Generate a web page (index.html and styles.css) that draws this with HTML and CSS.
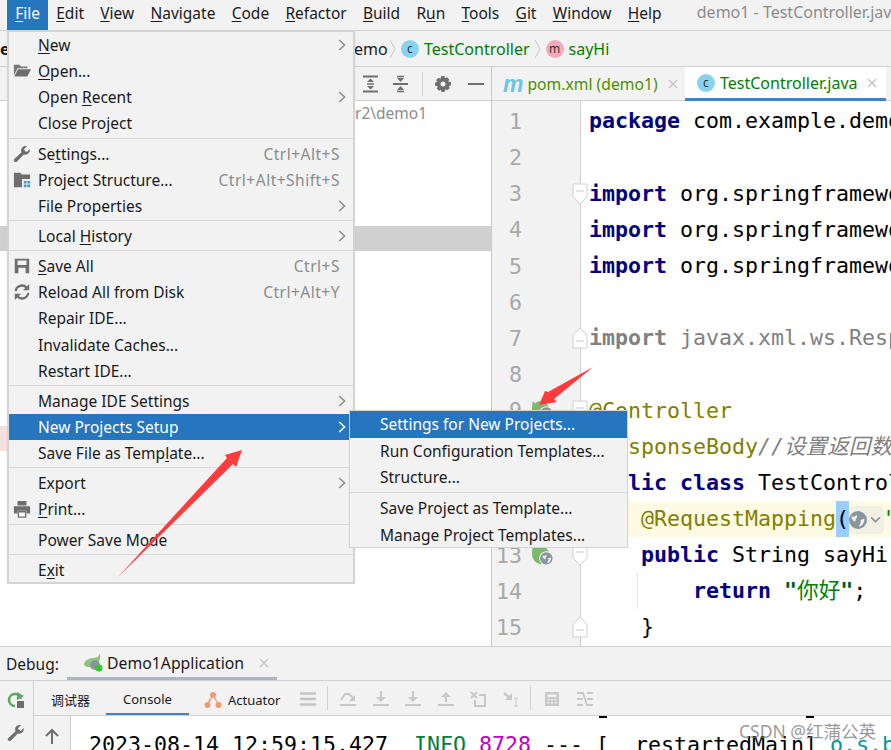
FILE: index.html
```html
<!DOCTYPE html>
<html lang="en">
<head>
    <meta charset="UTF-8">
    <meta name="viewport" content="width=device-width, initial-scale=1.0">
    <title>demo1 - TestController.java</title>
    <link rel="stylesheet" href="styles.css">
</head>
<body>
    <svg class="sprite" width="0" height="0">
        <symbol id="chev" viewBox="0 0 8 12"><polyline points="1.2,1 6.6,6 1.2,11" fill="none" stroke="currentColor" stroke-width="1.5"/></symbol>
        <symbol id="close" viewBox="0 0 10 10"><path d="M1 1L9 9M9 1L1 9" stroke="#c4c4c4" stroke-width="1.4"/></symbol>
        <symbol id="crumb" viewBox="0 0 7 20"><polyline points="1,1 6,10 1,19" fill="none" stroke="#c8c8c8" stroke-width="1"/></symbol>
        <symbol id="fold-down" viewBox="0 0 16 22"><path d="M1 1H15V14L8 21L1 14Z" fill="#fff" stroke="#d0d0d0"/><path d="M4 8H12" stroke="#c8c8c8"/></symbol>
        <symbol id="fold-up" viewBox="0 0 16 22"><path d="M1 21H15V8L8 1L1 8Z" fill="#fff" stroke="#d0d0d0"/><path d="M4 14H12" stroke="#c8c8c8"/></symbol>
        <symbol id="wrench" viewBox="0 0 20 20"><path d="M18.5 4.5L15 8L12 5L15.5 1.5C12.500 0.500 9 2.500 9 6C9 7 9.200 7.500 9.500 8L1.500 15.500C0.500 16.500 0.700 17.500 1.500 18.300C2.300 19.100 3.500 19.300 4.500 18.300L12 10.500C15.500 11.500 19.500 9 18.500 4.500Z" fill="#6e6e6e"/></symbol>
        <symbol id="leaf-globe" viewBox="0 0 24 22"><path d="M2 1C0 8 1 18 9 20C14 21 12 12 18 8C20 5 12 8 7 5C5 4 3 3 2 1Z" fill="#7dbb6c"/><circle cx="10" cy="10" r="9" fill="#7dbb6c"/><circle cx="16" cy="14" r="7.500" fill="#f2f2f2"/><circle cx="16" cy="14" r="6.500" fill="#8d959c"/><path d="M12 11C14 12 15 11 16 10C17 12 15 13 15 15C13 15 12 13 12 11ZM18 14L21 13C21 16 19 19 17 19C17 17 19 16 18 14Z" fill="#f2f2f2"/></symbol>
    </svg>

    <div class="ide">
        <div class="menubar">
            <span class="top-item active"><u>F</u>ile</span>
            <span class="top-item"><u>E</u>dit</span>
            <span class="top-item"><u>V</u>iew</span>
            <span class="top-item"><u>N</u>avigate</span>
            <span class="top-item"><u>C</u>ode</span>
            <span class="top-item"><u>R</u>efactor</span>
            <span class="top-item"><u>B</u>uild</span>
            <span class="top-item">R<u>u</u>n</span>
            <span class="top-item"><u>T</u>ools</span>
            <span class="top-item"><u>G</u>it</span>
            <span class="top-item"><u>W</u>indow</span>
            <span class="top-item"><u>H</u>elp</span>
            <span class="win-title">demo1 - TestController.java</span>
        </div>

        <div class="crumbs">
            <span class="crumb-cut">e</span>
            <span class="crumb-demo">emo</span>
            <svg class="crumb-sep"><use href="#crumb"/></svg>
            <span class="badge badge-c">c</span>
            <span class="crumb-name">TestController</span>
            <svg class="crumb-sep"><use href="#crumb"/></svg>
            <span class="badge badge-m">m</span>
            <span class="crumb-name">sayHi</span>
        </div>

        <div class="workspace">
            <div class="project">
                <div class="panel-head">
                    <svg class="tool" viewBox="0 0 18 18"><path d="M1 1.500H16M1 16.500H16" stroke="#6e6e6e" stroke-width="2"/><path d="M8.500 3.500L12 7H5ZM8.500 14.500L12 11H5Z" fill="#6e6e6e"/><path d="M5 9H12" stroke="#6e6e6e" stroke-width="1.500"/></svg>
                    <svg class="tool" viewBox="0 0 18 18"><path d="M1 9H16" stroke="#6e6e6e" stroke-width="2"/><path d="M8.500 7L12 3H5ZM8.500 11L12 15H5Z" fill="#6e6e6e"/><path d="M5 1.500H12M5 16.500H12" stroke="#6e6e6e" stroke-width="1.500"/></svg>
                    <span class="tool-sep"></span>
                    <svg class="tool gear" viewBox="0 0 16 16"><path d="M6.500 0H9.500L10 2.300L12 1.200L14.300 3.500L13.200 5.500L16 6.200V9.500L13.700 10L14.800 12L12.500 14.300L10.500 13.200L9.500 16H6.500L6 13.700L4 14.800L1.700 12.500L2.800 10.500L0 9.500V6.500L2.300 6L1.200 4L3.500 1.700L5.500 2.800ZM8 5.500A2.500 2.500 0 1 0 8 10.500A2.500 2.500 0 1 0 8 5.500Z" fill="#6e6e6e" fill-rule="evenodd"/></svg>
                    <span class="minimize"></span>
                </div>
                <div class="tree">
                    <div class="tree-path">r2\demo1</div>
                    <div class="tree-selected"></div>
                    <div class="tree-error"></div>
                </div>
            </div>

            <div class="editor">
                <div class="tabs">
                    <div class="tab tab-pom">
                        <span class="maven">m</span>
                        <span>pom.xml (demo1)</span>
                        <svg class="tab-x"><use href="#close"/></svg>
                    </div>
                    <div class="tab tab-active">
                        <span class="badge badge-c">c</span>
                        <span>TestController.java</span>
                        <svg class="tab-x"><use href="#close"/></svg>
                    </div>
                </div>
                <div class="edit-area">
                    <div class="gutter">
                        <div class="gut-row"><span class="num">1</span></div>
                        <div class="gut-row"><span class="num">2</span></div>
                        <div class="gut-row"><span class="num">3</span><svg class="fold"><use href="#fold-down"/></svg></div>
                        <div class="gut-row"><span class="num">4</span></div>
                        <div class="gut-row"><span class="num">5</span></div>
                        <div class="gut-row"><span class="num">6</span></div>
                        <div class="gut-row"><span class="num">7</span><svg class="fold"><use href="#fold-up"/></svg></div>
                        <div class="gut-row"><span class="num">8</span></div>
                        <div class="gut-row"><span class="num">9</span><svg class="gut-icon"><use href="#leaf-globe"/></svg><svg class="fold"><use href="#fold-down"/></svg></div>
                        <div class="gut-row"><span class="num">10</span></div>
                        <div class="gut-row"><span class="num">11</span></div>
                        <div class="gut-row"><span class="num">12</span></div>
                        <div class="gut-row"><span class="num">13</span><svg class="gut-icon"><use href="#leaf-globe"/></svg><svg class="fold"><use href="#fold-down"/></svg></div>
                        <div class="gut-row"><span class="num">14</span></div>
                        <div class="gut-row"><span class="num">15</span><svg class="fold"><use href="#fold-up"/></svg></div>
                    </div>
                    <div class="code">
                        <div class="line"><b>package</b> com.example.demo1;</div>
                        <div class="line"></div>
                        <div class="line"><b>import</b> org.springframework.stereotype;</div>
                        <div class="line"><b>import</b> org.springframework.web.bind;</div>
                        <div class="line"><b>import</b> org.springframework.web.bind;</div>
                        <div class="line"></div>
                        <div class="line muted"><b>import</b> javax.xml.ws.Response;</div>
                        <div class="line"></div>
                        <div class="line"><span class="anno">@Controller</span></div>
                        <div class="line"><span class="anno">@ResponseBody</span><i class="muted">//设置返回数据</i></div>
                        <div class="line"><b>public class</b> TestController {</div>
                        <div class="line line-hl">    <span class="anno">@RequestMapping</span><span class="paren">(</span><span class="hint"><svg class="hint-globe" viewBox="0 0 14 14"><circle cx="7" cy="7" r="7" fill="#8d959c"/><path d="M2 4C4 5 5 4 6 3C7 5 5 6 5 8C3 8 2 6 2 4ZM9 7L12 6C12 9 10 12 8 12C8 10 10 9 9 7Z" fill="#f2f2f2"/></svg><svg class="hint-chev" viewBox="0 0 10 6"><polyline points="1,1 5,5 9,1" fill="none" stroke="#8d959c" stroke-width="1.500"/></svg></span><span class="str">"</span></div>
                        <div class="line">    <b>public</b> String sayHi()</div>
                        <div class="line"><span class="guide"></span>        <b>return</b> <span class="str"><b>"</b>你好<b>"</b></span>;</div>
                        <div class="line">    }</div>
                    </div>
                </div>
            </div>
        </div>

        <div class="debug">
            <div class="debug-head">
                <span class="debug-label">Debug:</span>
                <div class="debug-tab">
                    <svg class="run-icon" viewBox="0 0 20 18"><path d="M17 0C18 4 16 9 13 11C10 14 4 14 1 11C1 7 5 4 10 4C13 4 15 3 17 0Z" fill="#8cc47c"/><circle cx="12" cy="11" r="5" fill="#8d959c"/><circle cx="16" cy="14" r="3.500" fill="#32c832"/></svg>
                    <span>Demo1Application</span>
                    <svg class="tab-x"><use href="#close"/></svg>
                </div>
            </div>
            <div class="debug-body">
                <div class="side">
                    <svg class="side-icon" viewBox="0 0 18 18"><path d="M14 8A6 6 0 1 0 8 15" fill="none" stroke="#59a869" stroke-width="2.500"/><path d="M10 1L17 5L10 9Z" fill="#59a869"/><rect x="10" y="10" width="7" height="7" fill="#6e6e6e"/></svg>
                    <svg class="side-icon"><use href="#wrench"/></svg>
                </div>
                <div class="debug-main">
                    <div class="debug-tools">
                        <span class="dtab dtab-cn">调试器</span>
                        <span class="dtab dtab-console">Console</span>
                        <span class="dtab dtab-act">
                            <svg class="act-icon" viewBox="0 0 18 18"><path d="M3.500 14L9 4L14.500 14" fill="none" stroke="#f0a07c" stroke-width="1.500"/><path d="M3.500 14L6 8" stroke="#f0a07c" stroke-width="1.500"/><circle cx="9" cy="4" r="3" fill="#ef9a76"/><circle cx="3.500" cy="14" r="3" fill="#ef9a76"/><circle cx="14.500" cy="14" r="3" fill="#ef9a76"/></svg>
                            Actuator
                        </span>
                        <svg class="dbtn dbtn-menu" viewBox="0 0 16 16"><path d="M0 2.500H16M0 8H16M0 13.500H16" stroke="#c4c4c4" stroke-width="2.500"/></svg>
                        <span class="tool-sep tool-sep-gray"></span>
                        <svg class="dbtn" viewBox="0 0 16 16"><path d="M1 9L5 3H9L14 8" fill="none" stroke="#c8c8c8" stroke-width="2"/><path d="M15 4V10H9Z" fill="#c8c8c8"/><path d="M0 14H16" stroke="#c8c8c8" stroke-width="2"/></svg>
                        <svg class="dbtn" viewBox="0 0 16 16"><path d="M8 0V8" stroke="#c8c8c8" stroke-width="2"/><path d="M3 6H13L8 11Z" fill="#c8c8c8"/><path d="M0 14H16" stroke="#c8c8c8" stroke-width="2"/></svg>
                        <svg class="dbtn" viewBox="0 0 16 16"><path d="M8 0V8" stroke="#c8c8c8" stroke-width="2"/><path d="M3 6H13L8 11Z" fill="#c8c8c8"/><path d="M0 14H16" stroke="#c8c8c8" stroke-width="2"/></svg>
                        <svg class="dbtn" viewBox="0 0 16 16"><path d="M8 4V11" stroke="#c8c8c8" stroke-width="2"/><path d="M3 6H13L8 1Z" fill="#c8c8c8"/><path d="M0 14H16" stroke="#c8c8c8" stroke-width="2"/></svg>
                        <svg class="dbtn" viewBox="0 0 16 16"><path d="M1 1L7 7M7 1L1 7" stroke="#c8c8c8" stroke-width="2"/><path d="M9 4H15V15H5V9" fill="none" stroke="#c8c8c8" stroke-width="2"/></svg>
                        <svg class="dbtn" viewBox="0 0 16 16"><path d="M1 2L8 8" stroke="#c8c8c8" stroke-width="2.500"/><path d="M2 9H9V2Z" fill="#c8c8c8"/><path d="M11 7H15M13 7V15M11 15H15" stroke="#c8c8c8" stroke-width="1"/></svg>
                        <span class="tool-sep tool-sep-gray tool-sep-calc"></span>
                        <svg class="dbtn" viewBox="0 0 16 16"><path d="M1 1H15V15H1ZM3.500 3.500V6H12.500V3.500ZM3.500 8V9.500H5.500V8ZM7 8V9.500H9V8ZM10.500 8V9.500H12.500V8ZM3.500 11V12.500H5.500V11ZM7 11V12.500H9V11ZM10.500 11V12.500H12.500V11Z" fill="#c8c8c8" fill-rule="evenodd"/></svg>
                        <svg class="dbtn" viewBox="0 0 16 16"><path d="M0 2H6L10 14H16M0 14H6M10 2H16M0 8H6M10 8H16" fill="none" stroke="#c8c8c8" stroke-width="1.800"/></svg>
                    </div>
                    <div class="console-wrap">
                        <div class="console-side">
                            <svg class="up-icon" viewBox="0 0 14 16"><path d="M7 16V2M1 8L7 2L13 8" fill="none" stroke="#6e6e6e" stroke-width="2"/></svg>
                        </div>
                        <div class="console">
                            <div class="prev-line"><span class="prev-a">[</span><span class="prev-b">]</span></div>
                            <div class="log">2023-08-14 12:59:15.427  <span class="log-info">INFO</span> <span class="log-pid">8728</span> --- [  restartedMain] <span class="log-cls">o.s.b</span></div>
                        </div>
                    </div>
                </div>
            </div>
        </div>
    </div>

    <div class="menu">
        <div class="mi"><span class="mi-icon"></span><span class="mi-text"><u>N</u>ew</span><svg class="mi-chev"><use href="#chev"/></svg></div>
        <div class="mi"><span class="mi-icon"><svg viewBox="0 0 20 20"><path d="M1 3H7L9 5H16V7H5L1 15Z" fill="#7a7a7a"/><path d="M5.500 8H20L16 16H1.500Z" fill="#6e6e6e"/></svg></span><span class="mi-text"><u>O</u>pen...</span></div>
        <div class="mi"><span class="mi-icon"></span><span class="mi-text">Open <u>R</u>ecent</span><svg class="mi-chev"><use href="#chev"/></svg></div>
        <div class="mi"><span class="mi-icon"></span><span class="mi-text">Close Project</span></div>
        <div class="msep"></div>
        <div class="mi"><span class="mi-icon"><svg><use href="#wrench"/></svg></span><span class="mi-text">Se<u>t</u>tings...</span><span class="mi-key">Ctrl+Alt+S</span></div>
        <div class="mi"><span class="mi-icon"><svg viewBox="0 0 20 20"><path d="M1 2H8L10 4H19V9H10V18H1Z" fill="#6e6e6e"/><path d="M12 11H15V14H12ZM16 11H19V14H16ZM12 15H15V18H12ZM16 15H19V18H16Z" fill="#3b97d3"/></svg></span><span class="mi-text">Project Structure...</span><span class="mi-key">Ctrl+Alt+Shift+S</span></div>
        <div class="mi"><span class="mi-icon"></span><span class="mi-text">File Properties</span><svg class="mi-chev"><use href="#chev"/></svg></div>
        <div class="msep"></div>
        <div class="mi"><span class="mi-icon"></span><span class="mi-text">Local <u>H</u>istory</span><svg class="mi-chev"><use href="#chev"/></svg></div>
        <div class="msep"></div>
        <div class="mi"><span class="mi-icon"><svg viewBox="0 0 20 20"><path d="M2 2H18V18H2ZM5 4V9H15V4ZM6 12V18H14V12Z" fill="#6e6e6e" fill-rule="evenodd"/></svg></span><span class="mi-text"><u>S</u>ave All</span><span class="mi-key">Ctrl+S</span></div>
        <div class="mi"><span class="mi-icon"><svg viewBox="0 0 20 20"><path d="M3 9A7 7 0 0 1 15 5" fill="none" stroke="#6e6e6e" stroke-width="2.500"/><path d="M17 11A7 7 0 0 1 5 15" fill="none" stroke="#6e6e6e" stroke-width="2.500"/><path d="M18 1V8H11ZM2 19V12H9Z" fill="#6e6e6e"/></svg></span><span class="mi-text">Reload All from Disk</span><span class="mi-key">Ctrl+Alt+Y</span></div>
        <div class="mi"><span class="mi-icon"></span><span class="mi-text">Repair IDE...</span></div>
        <div class="mi"><span class="mi-icon"></span><span class="mi-text">Invalidate Caches...</span></div>
        <div class="mi"><span class="mi-icon"></span><span class="mi-text">Restart IDE...</span></div>
        <div class="msep"></div>
        <div class="mi"><span class="mi-icon"></span><span class="mi-text">Manage IDE Settings</span><svg class="mi-chev"><use href="#chev"/></svg></div>
        <div class="mi mi-on"><span class="mi-icon"></span><span class="mi-text">New Projects Setup</span><svg class="mi-chev"><use href="#chev"/></svg></div>
        <div class="mi"><span class="mi-icon"></span><span class="mi-text">Save File as Temp<u>l</u>ate...</span></div>
        <div class="msep"></div>
        <div class="mi"><span class="mi-icon"></span><span class="mi-text">Export</span><svg class="mi-chev"><use href="#chev"/></svg></div>
        <div class="mi"><span class="mi-icon"><svg viewBox="0 0 20 20"><path d="M5 1H15V6H5ZM1 7H19V15H15V12H5V15H1Z" fill="#6e6e6e"/><path d="M6 13H14V19H6Z" fill="#fff" stroke="#6e6e6e" stroke-width="1.500"/></svg></span><span class="mi-text"><u>P</u>rint...</span></div>
        <div class="msep"></div>
        <div class="mi"><span class="mi-icon"></span><span class="mi-text">Power Save Mode</span></div>
        <div class="msep"></div>
        <div class="mi"><span class="mi-icon"></span><span class="mi-text">E<u>x</u>it</span></div>
    </div>

    <div class="submenu">
        <div class="mi mi-on"><span class="mi-text">Settings for New Projects...</span></div>
        <div class="mi"><span class="mi-text">Run Configuration Templates...</span></div>
        <div class="mi"><span class="mi-text">Structure...</span></div>
        <div class="msep"></div>
        <div class="mi"><span class="mi-text">Save Project as Template...</span></div>
        <div class="mi"><span class="mi-text">Manage Project Templates...</span></div>
    </div>

    <!-- red marks drawn over the screenshot -->
    <svg class="marks" viewBox="0 0 891 750">
        <polygon points="118,577 227,458 225,455 242,450 236,467 233,464" fill="#ff3b3b"/>
        <polygon points="593,367 548,392 545,391 539,405 557,402 554,399" fill="#ff3b3b"/>
    </svg>

    <div class="watermark">CSDN @红蒲公英</div>
</body>
</html>
```

FILE: styles.css
```css
* {
    box-sizing: border-box;
}
html, body {
    margin: 0;
    padding: 0;
}
body {
    position: relative;
    width: 891px;
    height: 750px;
    overflow: hidden;
    font-family: "Noto Sans", "Noto Sans CJK SC", sans-serif;
    font-size: 15.5px;
    color: #1a1a1a;
    background-color: #ffffff;
}
u {
    text-underline-offset: 2px;
}
.sprite {
    position: absolute;
}
.ide {
    display: flex;
    flex-direction: column;
    height: 750px;
}

/* menu bar */
.menubar {
    display: flex;
    align-items: flex-start;
    height: 31px;
    padding-left: 7px;
    background-color: #f2f2f2;
    border-bottom: 1px solid #d4d4d4;
    flex: none;
}
.top-item {
    padding: 0 8.15px;
    height: 30px;
    line-height: 26px;
    white-space: nowrap;
}
.top-item.active {
    background-color: #2675bf;
    color: #ffffff;
}
.win-title {
    margin-left: 27px;
    font-size: 16px;
    line-height: 25px;
    color: #8c8c8c;
    white-space: nowrap;
}

/* breadcrumb */
.crumbs {
    display: flex;
    align-items: center;
    height: 36px;
    font-size: 16px;
    background-color: #f2f2f2;
    border-bottom: 1px solid #d0d0d0;
    flex: none;
}
.crumb-cut {
    width: 7px;
    font-weight: bold;
    overflow: hidden;
}
.crumb-demo {
    margin-left: 347px;
    width: 31px;
}
.crumb-sep {
    width: 7px;
    height: 20px;
    margin: 0 5px 0 4px;
    flex: none;
}
.crumb-name {
    margin-left: 5px;
    color: #008000;
}
.badge {
    display: flex;
    align-items: center;
    justify-content: center;
    width: 18px;
    height: 18px;
    border-radius: 50%;
    font-size: 12px;
    line-height: 1;
    color: #333333;
    flex: none;
}
.badge-c {
    background-color: #87d3ef;
}
.badge-m {
    background-color: #f4aab8;
}

/* main area */
.workspace {
    display: flex;
    height: 579px;
    flex: none;
}
.project {
    width: 491px;
    flex: none;
    display: flex;
    flex-direction: column;
}
.panel-head {
    display: flex;
    align-items: center;
    height: 34px;
    padding-left: 362px;
    background-color: #f2f2f2;
    border-bottom: 1px solid #d0d0d0;
    flex: none;
}
.tool {
    width: 18px;
    height: 18px;
    margin-right: 12px;
    flex: none;
}
.tool.gear {
    width: 16px;
    height: 16px;
    margin-right: 17px;
}
.tool-sep {
    width: 1px;
    height: 24px;
    margin-right: 12px;
    background-color: #d0d0d0;
    flex: none;
}
.minimize {
    width: 16px;
    height: 2px;
    background-color: #6e6e6e;
}
.tree {
    flex: 1;
}
.tree-path {
    height: 24px;
    line-height: 24px;
    padding-left: 355px;
    color: #8c8c8c;
}
.tree-selected {
    height: 25px;
    margin-top: 101px;
    background-color: #d0d0d0;
}
.tree-error {
    width: 7px;
    height: 25px;
    margin-top: 175px;
    background-color: #f5dfdf;
}
.editor {
    flex: 1;
    min-width: 0;
    display: flex;
    flex-direction: column;
    border-left: 1px solid #c8c8c8;
}
.tabs {
    display: flex;
    height: 34px;
    background-color: #f2f2f2;
    border-bottom: 1px solid #d0d0d0;
    flex: none;
}
.tab {
    display: flex;
    align-items: center;
    font-size: 16px;
    color: #008000;
    white-space: nowrap;
}
.tab-pom {
    width: 193px;
    padding-left: 11px;
    gap: 4px;
    font-size: 15.7px;
    color: #4e8f00;
}
.tab-pom .tab-x {
    margin-left: 6px;
}
.tab-active {
    width: 201px;
    height: 34px;
    padding-left: 12px;
    gap: 5px;
    background-color: #ffffff;
    border-bottom: 3px solid #4083c9;
}
.tab-active .tab-x {
    margin-left: 4px;
}
.maven {
    font-family: "Liberation Sans", sans-serif;
    font-size: 23px;
    font-weight: bold;
    font-style: italic;
    line-height: 26px;
    color: #70c4e8;
}
.tab-x {
    width: 10px;
    height: 10px;
    flex: none;
}
.edit-area {
    flex: 1;
    display: flex;
    min-height: 0;
    font-family: "DejaVu Sans Mono", "Noto Sans CJK SC", monospace;
    font-size: 21.6px;
}
.gutter {
    position: relative;
    width: 89px;
    padding-top: 2.4px;
    background-color: #f2f2f2;
    border-right: 1px solid #d0d0d0;
    flex: none;
}
.gut-row {
    display: flex;
    align-items: center;
    height: 36.15px;
}
.num {
    width: 30px;
    text-align: right;
    color: #a8a8a8;
    flex: none;
}
.gut-icon {
    width: 23px;
    height: 21px;
    margin-left: 9px;
    flex: none;
}
.fold {
    width: 16px;
    height: 22px;
    margin-left: auto;
    margin-right: -8px;
    flex: none;
}
.code {
    flex: 1;
    min-width: 0;
    padding-top: 2.4px;
    overflow: hidden;
}
.line {
    position: relative;
    height: 36.15px;
    line-height: 36.15px;
    padding-left: 8px;
    white-space: pre;
    color: #000000;
}
.line b {
    color: #000080;
}
.muted {
    color: #808080;
}
.line.muted b {
    color: #808080;
}
.anno {
    color: #808000;
}
.str {
    color: #008000;
}
.line .str b {
    color: #005a20;
}
.line-hl {
    background-color: #fffae3;
}
.paren {
    display: inline-block;
    height: 36px;
    vertical-align: top;
    background-color: #99ccff;
}
.hint {
    display: inline-flex;
    align-items: center;
    width: 35px;
    height: 28px;
    vertical-align: middle;
    gap: 3px;
    border-radius: 5px;
    background-color: #f2f0e4;
}
.hint-globe {
    width: 18px;
    height: 18px;
    flex: none;
}
.hint-chev {
    width: 11px;
    height: 7px;
    flex: none;
}
.guide {
    position: absolute;
    left: 56px;
    top: 0;
    width: 1px;
    height: 36px;
    background-color: #e4e4e4;
}

/* debug panel */
.debug {
    flex: 1;
    display: flex;
    flex-direction: column;
    min-height: 0;
    background-color: #f2f2f2;
    border-top: 1px solid #d0d0d0;
}
.debug-head {
    display: flex;
    align-items: stretch;
    height: 34px;
    padding-left: 6px;
    border-bottom: 1px solid #d0d0d0;
    flex: none;
}
.debug-label {
    width: 61px;
    line-height: 34px;
}
.debug-tab {
    display: flex;
    align-items: center;
    gap: 4px;
    width: 210px;
    padding-left: 16px;
    padding-top: 2px;
    font-size: 15.8px;
    border-bottom: 3px solid #aab4c8;
}
.debug-tab .tab-x {
    margin-left: 11px;
}
.run-icon {
    width: 20px;
    height: 18px;
    flex: none;
}
.debug-body {
    flex: 1;
    display: flex;
    min-height: 0;
}
.side {
    display: flex;
    flex-direction: column;
    align-items: center;
    gap: 15px;
    width: 34px;
    padding-top: 10px;
    padding-right: 1px;
    border-right: 1px solid #d0d0d0;
    flex: none;
}
.side-icon {
    width: 18px;
    height: 18px;
    flex: none;
}
.debug-main {
    flex: 1;
    display: flex;
    flex-direction: column;
    min-width: 0;
}
.debug-tools {
    display: flex;
    align-items: center;
    height: 35px;
    border-bottom: 1px solid #d0d0d0;
    flex: none;
}
.dtab {
    display: flex;
    align-items: center;
    height: 34px;
    padding-top: 3px;
    font-size: 13px;
    white-space: nowrap;
}
.dtab-cn {
    margin-left: 17px;
}
.dtab-console {
    margin-left: 16px;
    padding: 3px 17px 0;
    border-bottom: 2px solid #4083c9;
}
.dtab-act {
    margin-left: 15px;
    gap: 6px;
}
.act-icon {
    width: 18px;
    height: 18px;
    flex: none;
}
.dbtn {
    width: 16px;
    height: 16px;
    margin-top: 2px;
    margin-right: 16.500px;
    flex: none;
}
.dbtn-menu {
    margin-left: 20px;
    margin-right: 11px;
}
.tool-sep-gray {
    margin-right: 12px;
}
.tool-sep-calc {
    margin-left: -5px;
    margin-right: 13px;
}
.console-wrap {
    flex: 1;
    display: flex;
    min-height: 0;
}
.console-side {
    width: 37px;
    padding-top: 11px;
    text-align: center;
    border-right: 1px solid #d0d0d0;
    flex: none;
}
.up-icon {
    width: 14px;
    height: 16px;
}
.console {
    flex: 1;
    position: relative;
    padding-left: 18px;
    background-color: #ffffff;
    font-family: "DejaVu Sans Mono", monospace;
    font-size: 21.6px;
    color: #000000;
    overflow: hidden;
}
.prev-line {
    height: 3px;
    overflow: hidden;
}
.prev-a {
    display: inline-block;
    width: 8px;
    height: 2px;
    margin-left: 510px;
    background-color: #000000;
}
.prev-b {
    display: inline-block;
    width: 8px;
    height: 2px;
    margin-left: 199px;
    background-color: #000000;
}
.log {
    margin-top: 10px;
    line-height: 32px;
    white-space: pre;
}
.log-info {
    color: #00803c;
}
.log-pid {
    color: #c000c0;
}
.log-cls {
    color: #009999;
}

/* popups */
.menu,
.submenu {
    position: absolute;
    background-color: #f2f2f2;
    border: 2px solid #d4d4d4;
    box-shadow: 0 0 1px rgba(0,0,0,0.1);
}
.menu {
    left: 7px;
    top: 30px;
    width: 348px;
    height: 554px;
}
.submenu {
    left: 349px;
    top: 410px;
    width: 279px;
    height: 138px;
    border-width: 1px;
}
.mi {
    display: flex;
    align-items: center;
    height: 26.15px;
    padding-right: 6px;
    white-space: nowrap;
}
.submenu .mi {
    height: 26.6px;
}
.mi-icon {
    display: flex;
    align-items: center;
    justify-content: center;
    width: 29px;
    height: 20px;
    padding-right: 3px;
    flex: none;
}
.mi-icon svg {
    width: 18px;
    height: 18px;
}
.mi-text {
    flex: 1;
}
.submenu .mi-text {
    padding-left: 30px;
}
.mi-key {
    margin-right: 7px;
    letter-spacing: 0.5px;
    color: #8c8c8c;
}
.mi-chev {
    width: 8px;
    height: 12px;
    margin-right: 1px;
    color: #8a8a8a;
    flex: none;
}
.mi-on {
    background-color: #2675bf;
    color: #ffffff;
}
.mi-on .mi-chev {
    color: #ffffff;
}
.msep {
    height: 3px;
    border-top: 1px solid #d8d8d8;
    margin-top: 1px;
}

.marks {
    position: absolute;
    left: 0;
    top: 0;
    width: 891px;
    height: 750px;
    pointer-events: none;
}
.watermark {
    position: absolute;
    right: 15px;
    top: 718px;
    font-size: 17.5px;
    color: rgba(120,120,120,0.75);
    white-space: nowrap;
}
```
